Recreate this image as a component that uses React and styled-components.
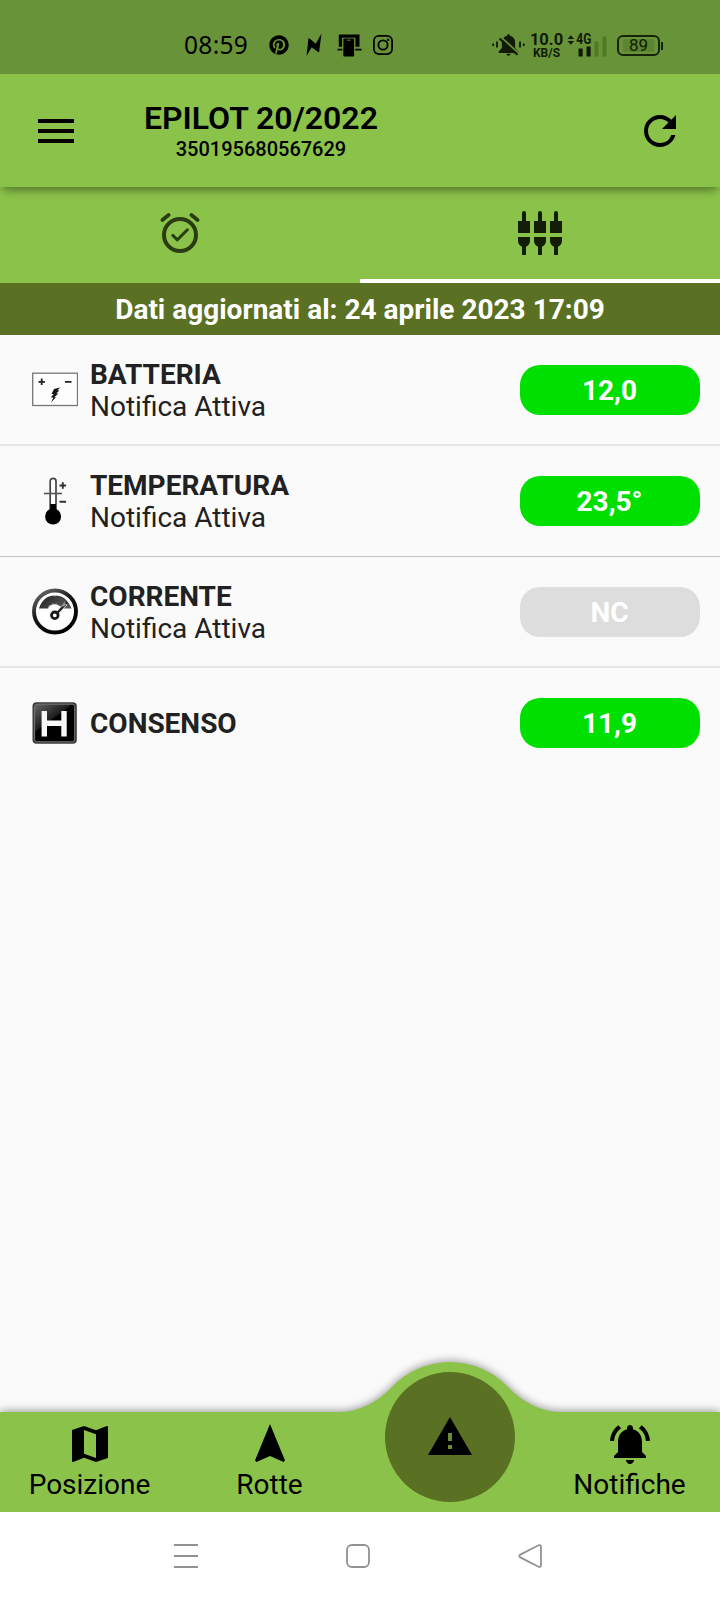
import React from 'react';
import styled, { createGlobalStyle } from 'styled-components';
import { FaPinterest } from 'react-icons/fa';
import {
  MdMap,
  MdMenu,
  MdNavigation,
  MdNotificationsActive,
  MdRefresh,
  MdSettingsInputComponent,
} from 'react-icons/md';

const theme = {
  primary: '#8bc34a',
  primaryDark: '#689339',
  accent: '#5a7022',
  background: '#fafafa',
  ok: '#00e000',
  disabled: '#dddddd',
  text: '#212121',
};

const sensors = [
  { name: 'BATTERIA', note: 'Notifica Attiva', value: '12,0', icon: 'battery', height: 109, line: 2 },
  { name: 'TEMPERATURA', note: 'Notifica Attiva', value: '23,5°', icon: 'thermometer', height: 110, line: 1 },
  { name: 'CORRENTE', note: 'Notifica Attiva', value: 'NC', icon: 'gauge', height: 109, line: 2, off: true },
  { name: 'CONSENSO', value: '11,9', icon: 'consent', height: 110, line: 0 },
];

export default function App() {
  return (
    <>
      <GlobalStyle />
      <Screen>
        <StatusBar />
        <AppBar>
          <MdMenu size={48} />
          <Heading>
            <h1>EPILOT 20/2022</h1>
            <p>350195680567629</p>
          </Heading>
          <MdRefresh size={48} />
        </AppBar>
        <Tabs>
          <Tab>
            <AlarmOnIcon />
          </Tab>
          <Tab $active>
            <MdSettingsInputComponent size={48} />
          </Tab>
        </Tabs>
        <Banner>Dati aggiornati al: 24 aprile 2023 17:09</Banner>
        <SensorList>
          {sensors.map((sensor) => (
            <SensorItem key={sensor.name} {...sensor} />
          ))}
        </SensorList>
        <BottomNav />
        <SystemNav />
      </Screen>
    </>
  );
}

const StatusBar = () => (
  <StyledStatusBar>
    <Clock>08:59</Clock>
    <NotificationIcons>
      <FaPinterest size={20} />
      <svg width="16" height="24" viewBox="0 0 16 24">
        <path d="M0.5 23 2.5 5 4.5 6.3 9.8 10.8 15.5 0.5 13 19.5 11.5 18.5 5.6 14.2Z" />
      </svg>
      <svg width="25" height="24" viewBox="0 0 25 24">
        <path d="M1.8 1.5h20.7v12.3h-4.2V4.8H5.2v9H1.8z" />
        <path d="M0.5 15.8h4.7v1.7H0.5zM18.3 15.8h6.2v1.7h-6.2z" />
        <path d="M6.3 6.5q0-1.2 1.2-1.2h8.4q1.2 0 1.2 1.2V22.5q0 1-1 1H7.3q-1 0-1-1z" />
        <path d="M5.7 15V4.8h12V15M10 7.2h3.5" fill="none" stroke={theme.primaryDark} strokeWidth="0.9" />
        <path d="M3 2.5h18.5v2H3z" />
      </svg>
      <svg width="20" height="20" viewBox="0 0 20 20" fill="none" stroke="#000" strokeWidth="1.8">
        <rect x="0.9" y="0.9" width="18.2" height="18.2" rx="5" />
        <circle cx="10" cy="10" r="4.6" />
        <circle cx="15.2" cy="4.8" r="1.3" fill="#000" stroke="none" />
      </svg>
    </NotificationIcons>
    <SystemIcons>
      <svg width="33" height="24" viewBox="0 0 33 24">
        <path d="M16.5 1.2c1 0 1.6.7 1.6 1.6 3.4.8 5 3.3 5 6.7v5.5l3.2 3.4v1.6H6.7v-1.6l3.2-3.4V9.5c0-3.4 1.6-5.9 5-6.7 0-.9.6-1.6 1.6-1.6zM14.3 20.8h4.4c-.2 1.3-1 2-2.2 2s-2-.7-2.200-2z" />
        <path d="M9.4 4.6 26.3 19.8" stroke={theme.primaryDark} strokeWidth="1.8" />
        <path d="M7.5 5.5 25.5 21.7" stroke="#111a06" strokeWidth="2.2" />
        <path d="M1.2 10.5v2.5M5 8.5v6M28 8.5v6M31.8 10.5v2.5" stroke="#111a06" strokeWidth="1.8" />
      </svg>
      <NetSpeed>
        <span>10.0</span>
        <small>KB/S</small>
      </NetSpeed>
      <svg width="41" height="32" viewBox="0 -4 41 32">
        <path d="M0.5 6 3.8 2.3 7.1 6zM0.5 8 3.8 11.7 7.1 8z" />
        <SignalText x="9.3" y="11.3" textLength="15" lengthAdjust="spacingAndGlyphs">4G</SignalText>
        <path d="M11.5 15.5h4.2v8h-4.2zM19.5 13.5h4.2v10h-4.2z" />
        <path d="M27.5 8.5h4v15h-4zM35.5 3.5h4v20h-4z" fill="#527a25" />
      </svg>
      <BatteryLevel>
        <span>89</span>
      </BatteryLevel>
    </SystemIcons>
  </StyledStatusBar>
);

const SensorItem = ({ name, note, value, icon, height, line, off }) => {
  const Icon = sensorIcons[icon];
  return (
    <SensorRow $height={height} $line={line}>
      <Icon />
      <SensorText>
        <strong>{name}</strong>
        {note && <span>{note}</span>}
      </SensorText>
      <ValuePill $off={off}>{value}</ValuePill>
    </SensorRow>
  );
};

const BatteryIcon = () => (
  <svg width="46" height="47" viewBox="0 0 46 47">
    <rect x="0.7" y="7.2" width="44.8" height="32.3" fill="#fdfdfd" stroke="#777" strokeWidth="1.3" />
    <path d="M6.5 15.8h6.4M9.7 12.6v6.4M33 15.8h6.5" stroke="#222" strokeWidth="1.8" />
    <path d="M28 21.5 22 23 19.5 28h2.2L18.8 31.5h2.6L19 36.5l5-5.3h-1.8L26.5 27.5h-2.3L27.5 24.5h-2z" fill="#151515" />
  </svg>
);

const ThermometerIcon = () => (
  <svg width="46" height="48" viewBox="0 0 46 48">
    <path d="M18.2 33V4.2a2.9 2.9 0 0 1 5.8 0V33" fill="#fff" stroke="#444" strokeWidth="1.7" />
    <path d="M12 16.5h18" stroke="#555" strokeWidth="1.6" />
    <path d="M27.5 8.5h6.6M30.8 5.2v6.6M27.5 24.8h6.6" stroke="#333" strokeWidth="1.9" />
    <path d="M18.2 27h5.8v6h-5.8z" />
    <circle cx="21.1" cy="39.5" r="8" />
  </svg>
);

const GaugeIcon = () => (
  <svg width="46" height="47" viewBox="0 0 46 47">
    <defs>
      <linearGradient id="gaugeRing" x1="0" y1="0" x2="0.6" y2="1">
        <stop offset="0" stopColor="#777" />
        <stop offset="0.5" stopColor="#161616" />
        <stop offset="1" stopColor="#000" />
      </linearGradient>
      <linearGradient id="gaugeDial" x1="0" y1="0" x2="1" y2="0.4">
        <stop offset="0" stopColor="#222" />
        <stop offset="1" stopColor="#555" />
      </linearGradient>
    </defs>
    <circle cx="23" cy="23.5" r="21" fill="#fff" stroke="url(#gaugeRing)" strokeWidth="3.9" />
    <path d="M7 20.5C9.5 12 15.5 7.5 23 7.5s13.5 4.5 16.5 13H30c-1.5-2.5-4-4-7-4s-5.5 1.5-7 4z" fill="url(#gaugeDial)" />
    <path d="M23 5.5v3M16.5 19.5l1-2 1.5.5 1.5-2 2.5.5 2-.5" fill="none" stroke="#eee" strokeWidth="0.7" />
    <path d="M25.5 25 34 15.5" stroke="#ddd" strokeWidth="3.4" />
    <path d="M24.5 25.8 35 14.5" stroke="#222" strokeWidth="2.2" />
    <path d="M31 18.5 33.3 16l1.7 1.5" fill="none" stroke="#ddd" strokeWidth="1" />
    <circle cx="22.8" cy="27.3" r="3.3" fill="#fff" stroke="#1a1a1a" strokeWidth="2.8" />
  </svg>
);

const ConsentIcon = () => (
  <svg width="46" height="48" viewBox="0 0 46 48">
    <defs>
      <linearGradient id="consentFill" x1="0" y1="0" x2="0.7" y2="0.9">
        <stop offset="0" stopColor="#666" />
        <stop offset="0.5" stopColor="#1c1c1c" />
        <stop offset="0.52" stopColor="#000" />
      </linearGradient>
    </defs>
    <rect x="0.5" y="3.2" width="44.3" height="41.6" rx="4" fill="#3a3a3a" />
    <rect x="2.6" y="5.2" width="40.1" height="37.6" rx="2.5" fill="url(#consentFill)" stroke="#777" strokeWidth="1" />
    <path d="M12.3 12v25.5M32 12v25.5M12.3 24.2H32" stroke="#f7f7f7" strokeWidth="5.4" />
  </svg>
);

const sensorIcons = {
  battery: BatteryIcon,
  thermometer: ThermometerIcon,
  gauge: GaugeIcon,
  consent: ConsentIcon,
};

const AlarmOnIcon = () => (
  <svg width="48" height="48" viewBox="0 0 24 24" fill="none" stroke="#2a3d12" strokeWidth="2" strokeLinecap="round">
    <circle cx="12" cy="13" r="8" />
    <path d="M3.2 5.5 6.3 3M20.8 5.5 17.7 3" strokeWidth="1.9" />
    <path d="M8.4 13.2 10.7 15.4 15.7 10.4" strokeWidth="1.5" strokeLinejoin="round" />
  </svg>
);

const BottomNav = () => (
  <StyledBottomNav>
    <NavShape viewBox="0 0 720 160">
      <path d="M0 60H338Q368 60 392.2 34.7A80 80 0 0 1 507.8 34.7Q532 60 562 60H720V160H0Z" />
    </NavShape>
    <NavItem>
      <MdMap size={48} />
      <span>Posizione</span>
    </NavItem>
    <NavItem>
      <MdNavigation size={48} />
      <span>Rotte</span>
    </NavItem>
    <NavCenter>
      <AlertButton>
        <svg width="48" height="48" viewBox="0 0 24 24">
          <path d="M1 21h22L12 2z" />
          <path d="M11 10h2v4h-2zM11 16h2v2h-2z" fill="#6f8a36" />
        </svg>
      </AlertButton>
    </NavCenter>
    <NavItem>
      <MdNotificationsActive size={48} />
      <span>Notifiche</span>
    </NavItem>
  </StyledBottomNav>
);

const SystemNav = () => (
  <StyledSystemNav>
    <svg width="26" height="26" viewBox="0 0 26 26">
      <path d="M1 2h24M1 13h24M1 24h24" />
    </svg>
    <svg width="26" height="26" viewBox="0 0 26 26">
      <rect x="2" y="2" width="22" height="22" rx="5" />
    </svg>
    <svg width="26" height="26" viewBox="0 0 26 26">
      <path d="M3.3 11.6 21.5 2.3Q24 1.5 24 4V22Q24 24.5 21.5 23.7L3.3 14.4Q1.3 13 3.3 11.6Z" />
    </svg>
  </StyledSystemNav>
);

const GlobalStyle = createGlobalStyle`
  body {
    margin: 0;
    background: ${theme.background};
  }

  * {
    box-sizing: border-box;
  }

  svg {
    display: block;
    flex-shrink: 0;
  }
`;

const Screen = styled.div`
  width: 720px;
  height: 1600px;
  display: flex;
  flex-direction: column;
  overflow: hidden;
  background: ${theme.background};
  color: #000;
  font-family: Roboto, sans-serif;
`;

const StyledStatusBar = styled.div`
  height: 74px;
  padding: 16px 57px 0 184px;
  display: flex;
  align-items: center;
  background: ${theme.primaryDark};
`;

const Clock = styled.span`
  width: 85px;
  font-family: 'Noto Sans', sans-serif;
  font-size: 24.5px;
  line-height: 30px;
  letter-spacing: 0.3px;
`;

const NotificationIcons = styled.div`
  display: flex;
  align-items: center;
  gap: 15px;

  & svg:nth-child(2) {
    margin-left: 2px;
  }

  & svg:last-child {
    margin-left: -4px;
  }
`;

const SystemIcons = styled.div`
  margin-left: auto;
  display: flex;
  align-items: center;
  fill: #111a06;
  color: #111a06;
`;

const NetSpeed = styled.div`
  width: 42px;
  padding: 1px 0 0 1px;
  display: flex;
  flex-direction: column;
  align-items: center;
  font-weight: 700;

  & span {
    font-size: 16.5px;
    line-height: 14px;
  }

  & small {
    font-size: 12px;
    line-height: 12px;
  }
`;

const SignalText = styled.text`
  font-size: 14px;
  font-weight: 700;
`;

const BatteryLevel = styled.div`
  position: relative;
  width: 43px;
  height: 21px;
  margin: 0 3px 0 9px;
  padding: 2px 4px;
  border: 2px solid #172309;
  border-radius: 6px;

  & span {
    display: block;
    height: 13px;
    background: #5c8530;
    font-size: 17px;
    line-height: 13px;
    text-align: center;
  }

  &::after {
    content: '';
    position: absolute;
    top: 5px;
    right: -5px;
    width: 2px;
    height: 8px;
    background: #172309;
  }
`;

const AppBar = styled.header`
  position: relative;
  height: 113px;
  padding: 0 36px 0 32px;
  display: flex;
  align-items: center;
  background: ${theme.primary};
  box-shadow: 0 6px 9px -3px rgba(0, 0, 0, 0.42);

  & > svg:last-child {
    margin-left: auto;
  }
`;

const Heading = styled.div`
  margin-left: 64px;
  padding-bottom: 1px;
  text-align: center;

  & h1 {
    margin: 0;
    font-size: 32px;
    font-weight: 600;
    line-height: 38px;
  }

  & p {
    margin: 0;
    font-size: 20px;
    font-weight: 500;
    line-height: 24px;
  }
`;

const Tabs = styled.div`
  height: 96px;
  display: grid;
  grid-template-columns: 1fr 1fr;
  background: ${theme.primary};
`;

const Tab = styled.div`
  display: flex;
  justify-content: center;
  align-items: center;
  color: #141d08;
  border-bottom: 4px solid ${(props) => (props.$active ? '#fff' : 'transparent')};
`;

const Banner = styled.div`
  height: 52px;
  background: ${theme.accent};
  color: #fff;
  font-size: 28px;
  font-weight: 700;
  line-height: 53px;
  text-align: center;
`;

const SensorList = styled.div`
  flex: 1;
`;

const SensorRow = styled.div`
  height: ${(props) => props.$height + props.$line}px;
  padding: 0 20px 0 32px;
  display: flex;
  align-items: center;
  border-bottom: ${(props) => props.$line}px solid ${(props) => (props.$line === 1 ? '#c6c6c6' : '#e6e6e6')};
`;

const SensorText = styled.div`
  flex: 1;
  margin-left: 12px;
  padding-top: 2px;
  display: flex;
  flex-direction: column;
  color: ${theme.text};
  font-size: 28px;
  line-height: 32px;

  & strong {
    font-weight: 700;
  }
`;

const ValuePill = styled.div`
  width: 180px;
  height: 50px;
  padding-right: 1px;
  border-radius: 20px;
  background: ${(props) => (props.$off ? theme.disabled : theme.ok)};
  color: #fff;
  font-size: 28px;
  font-weight: 700;
  line-height: 51px;
  text-align: center;
`;

const StyledBottomNav = styled.nav`
  position: relative;
  height: 100px;
  display: grid;
  grid-template-columns: repeat(4, 1fr);
  grid-template-rows: 100px;
`;

const NavShape = styled.svg`
  position: absolute;
  left: 0;
  bottom: 0;
  width: 720px;
  height: 160px;
  overflow: visible;
  fill: ${theme.primary};
  filter: drop-shadow(0 -1px 4px rgba(0, 0, 0, 0.4));
`;

const NavItem = styled.div`
  position: relative;
  padding-top: 8px;
  display: flex;
  flex-direction: column;
  align-items: center;

  & span {
    padding-right: 1px;
    font-size: 28px;
    line-height: 34px;
  }
`;

const NavCenter = styled.div`
  position: relative;
  display: flex;
  justify-content: center;
  align-items: flex-end;
  padding-bottom: 10px;
`;

const AlertButton = styled.div`
  flex-shrink: 0;
  width: 130px;
  height: 130px;
  border-radius: 50%;
  display: flex;
  justify-content: center;
  align-items: center;
  background: ${theme.accent};
`;

const StyledSystemNav = styled.div`
  position: relative;
  height: 88px;
  padding: 0 177px 0 173px;
  display: flex;
  justify-content: space-between;
  align-items: center;
  background: #fff;

  & svg {
    fill: none;
    stroke: #929292;
    stroke-width: 1.8;
  }
`;
